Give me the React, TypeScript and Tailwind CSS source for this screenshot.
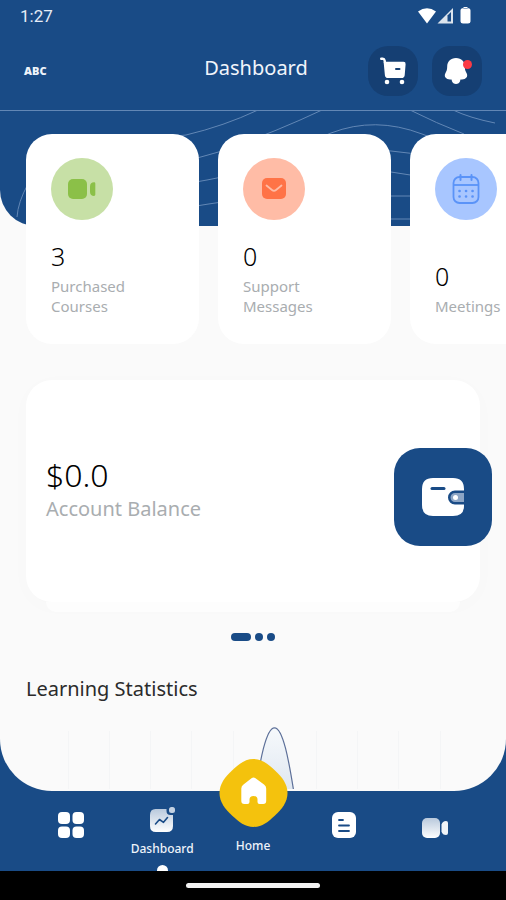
import React from 'react';
import clsx from 'clsx';

type Stat = {
  value: string;
  label: string;
  /** Background class of the round icon holder */
  tint: string;
  icon: React.ReactNode;
};

const VideoIcon = () => (
  <svg viewBox="0 0 28 20" className="h-5 w-7">
    <rect x="0" y="0" width="19" height="20" rx="5" fill="#8bc048" />
    <path
      d="M22 7.2c0-2.6 1.8-4 3.9-4 .9 0 1.4.5 1.4 1.4v11c0 .9-.5 1.4-1.4 1.4-2.1 0-3.900-1.400-3.900-4z"
      fill="#8bc048"
    />
  </svg>
);

const MailIcon = () => (
  <svg viewBox="0 0 26 24" className="h-6 w-[26px]">
    <rect x="1" y="1" width="24" height="21" rx="5" fill="#ff7347" />
    <path
      d="M5.500 8.500 11 13q2 1.600 4 0l5.500-4.500"
      fill="none"
      stroke="#ffbca6"
      strokeWidth="1.800"
      strokeLinecap="round"
    />
  </svg>
);

const CalendarIcon = () => (
  <svg viewBox="0 0 28 32" className="h-8 w-7" fill="none" stroke="#5a93f8">
    <rect x="1.500" y="4" width="25" height="26" rx="6" strokeWidth="1.800" />
    <path d="M2 12h24" strokeWidth="1.800" />
    <path d="M8.500 2v5M19.500 2v5" strokeWidth="2" strokeLinecap="round" />
    <path
      d="M7.500 18h.1M14 18h.1M20.500 18h.1M7.500 23.500h.1M14 23.500h.1M20.500 23.500h.1"
      strokeWidth="2.600"
      strokeLinecap="round"
    />
  </svg>
);

const stats: Stat[] = [
  {
    value: '3',
    label: 'Purchased Courses',
    tint: 'bg-[#c7e0a6]',
    icon: <VideoIcon />,
  },
  {
    value: '0',
    label: 'Support Messages',
    tint: 'bg-[#ffbca6]',
    icon: <MailIcon />,
  },
  {
    value: '0',
    label: 'Meetings',
    tint: 'bg-[#a8c6ff]',
    icon: <CalendarIcon />,
  },
];

const StatusBar = () => (
  <div className="flex h-8 items-center justify-between pl-5 pr-[33px]">
    <span className="font-[Roboto,sans-serif] text-[17px] leading-5 text-[#e6edf7]">
      1:27
    </span>
    <svg viewBox="0 0 56 18" className="h-[18px] w-14" fill="#fff">
      <path d="M1 4.500Q10 -2 19 4.500L10 16.500z" />
      <path d="M20.500 16.500 36 1v15.500z" opacity=".85" />
      <path d="M30.500 8.500 34 5v9.500h-3.500z" fill="#194b86" />
      <path d="M46.500 1.500h4V0h-4zM46.500 1h4q3 0 3 2.500v11q0 2-2.500 2h-5q-2.500 0-2.500-2v-11Q43.500 1 46.500 1z" />
    </svg>
  </div>
);

const TopBar = () => (
  <div className="grid h-[78px] grid-cols-[1fr_auto_1fr] items-center px-6">
    <span className="text-[11px] leading-4 font-black text-[#eef3fa]">ABC</span>
    <h1 className="pb-1.5 pl-1.5 text-xl text-[#f1f5fb]">Dashboard</h1>
    <div className="flex justify-end gap-[14px]">
      <button
        type="button"
        aria-label="Cart"
        className="flex size-[50px] items-center justify-center rounded-[20px] bg-[#153f73]"
      >
        <svg viewBox="0 0 28 28" className="size-7">
          <path
            d="M2.200 1.800h1.600q1.500 0 1.800 1.600L6 5.500"
            fill="none"
            stroke="#fff"
            strokeWidth="2.400"
            strokeLinecap="round"
          />
          <path
            d="M4.600 4.800H24.500q2.300 0 2.100 2.400l-.9 11Q25.400 21 22.500 21H9q-2.800 0-3.100-2.800z"
            fill="#fff"
          />
          <path d="M17 12h3.500" stroke="#153f73" strokeWidth="2" strokeLinecap="round" />
          <circle cx="8" cy="25" r="2.300" fill="#fff" />
          <circle cx="23" cy="25" r="2.300" fill="#fff" />
        </svg>
      </button>
      <button
        type="button"
        aria-label="Notifications"
        className="flex size-[50px] items-center justify-center rounded-[18px] bg-[#153f73]"
      >
        <svg viewBox="0 0 30 28" className="h-7 w-[30px]">
          <path
            d="M14 1C8.500 1 5.200 5 5.200 9.500c0 3-.6 4.500-1.700 6.500-2 3.800.6 6.200 4.500 6.500q6 .6 12 0c3.900-.3 6.500-2.700 4.500-6.500-1.100-2-1.700-3.500-1.700-6.500C22.800 5 19.500 1 14 1z"
            fill="#fff"
          />
          <path d="M9.800 22h8.400v2q-1.200 3-4.200 3t-4.200-3z" fill="#fff" />
          <circle cx="25.500" cy="7.500" r="4.500" fill="#fb3b45" />
        </svg>
      </button>
    </div>
  </div>
);

const HeaderPattern = () => (
  <svg
    viewBox="0 0 506 116"
    preserveAspectRatio="xMidYMin slice"
    className="h-[116px] w-full"
    fill="none"
    stroke="#6287b5"
    strokeWidth="1"
  >
    <path d="M0 .5h506" />
    <path d="M17 107Q18 92 28 74Q60 36 186 25Q224 16 258 0" />
    <path d="M190 50Q208 45 222 41Q280 20 322 0" />
    <path d="M190 73Q208 70 222 67Q290 40 331 23Q375 6 422 24Q450 34 506 60" />
    <path d="M190 97Q208 94 222 92Q300 30 391 41Q410 42 430 48" />
    <path d="M240 100Q310 62 391 62Q410 64 430 70" />
    <path d="M300 96Q350 84 391 86H430" />
    <path d="M300 112Q350 108 391 109H430" />
    <path d="M410 0Q436 13 464 24M453 0Q470 8 495 13" />
  </svg>
);

const StatCard = ({ value, label, tint, icon }: Stat) => (
  <article className="flex h-[210px] w-[173px] shrink-0 flex-col justify-between rounded-[26px] bg-white px-[25px] pt-6 pb-7">
    <div
      className={clsx(
        'flex size-[62px] items-center justify-center rounded-full',
        tint,
      )}
    >
      {icon}
    </div>
    <div>
      <p className="mb-2 text-[25px] leading-6 font-light text-black">{value}</p>
      <p className="w-24 text-[15px] leading-5 text-[#a9adb0]">{label}</p>
    </div>
  </article>
);

const BalanceCard = () => (
  <section className="mx-[26px] mt-9">
    <div className="flex h-[222px] items-center justify-between rounded-[26px] bg-white pl-5 shadow-[0_4px_24px_rgba(0,0,0,0.015)]">
      <div className="pt-1">
        <p className="text-[32px] leading-8 font-light text-black">$0.0</p>
        <p className="text-xl leading-9 text-[#a9adb0]">Account Balance</p>
      </div>
      <button
        type="button"
        aria-label="Wallet"
        className="-mr-3 mt-3 flex size-[98px] items-center justify-center rounded-[26px] bg-[#194b86]"
      >
        <svg viewBox="0 0 42 40" className="h-10 w-[42px]">
          <path
            d="M11 1h20q11 0 11 11v1.500h-9a7 7 0 0 0 0 14h9V29q0 10-11 10H11Q0 39 0 28V12Q0 1 11 1z"
            fill="#fff"
          />
          <path d="M10 11.500h12" stroke="#194b86" strokeWidth="3" strokeLinecap="round" />
          <path d="M42 16h-9a4.500 4.500 0 0 0 0 9h9z" fill="#8ca5c5" />
          <circle cx="33.500" cy="20.500" r="2.500" fill="#fff" />
        </svg>
      </button>
    </div>
    <div className="mx-5 h-[10px] rounded-b-[16px] bg-[#fdfdfd]" />
  </section>
);

const StatisticsChart = () => (
  <svg
    viewBox="0 0 506 62"
    preserveAspectRatio="xMidYMin slice"
    className="block h-[62px] w-full"
  >
    <defs>
      <linearGradient id="peak-fill" x1="0" y1="0" x2="0" y2="1">
        <stop offset="0" stopColor="#f6f9fc" />
        <stop offset="1" stopColor="#dfe7f0" />
      </linearGradient>
    </defs>
    <path
      d="M68.500 4v58M109.500 4v58M150.500 4v58M191.500 4v58M233.500 4v58M316.500 4v58M357.500 4v58M398.500 4v58M440.500 4v58"
      stroke="#f4f5f6"
    />
    <path
      d="M255 66C260 34 266 .8 274.500.8S289 34 294 66"
      fill="url(#peak-fill)"
      stroke="#5d7099"
      strokeWidth="1.200"
    />
  </svg>
);

const GridIcon = () => (
  <svg viewBox="0 0 26 26" className="size-[26px]" fill="#fff">
    <rect x="0" y="0" width="12" height="12" rx="4" />
    <rect x="14.500" y="0" width="11.500" height="12" rx="4" />
    <rect x="0" y="14.500" width="12" height="11.500" rx="4" />
    <rect x="14.500" y="14.500" width="11.500" height="11.500" rx="4" />
  </svg>
);

const ActivityIcon = () => (
  <svg viewBox="0 0 26 26" className="size-[26px]">
    <defs>
      <linearGradient id="activity-fill" x1="0" y1="0" x2="0" y2="1">
        <stop offset="0" stopColor="#b9c9dc" />
        <stop offset="1" stopColor="#fff" />
      </linearGradient>
    </defs>
    <path
      d="M6.500 2h11v2q0 4 4 4H24v11q0 6-6 6H7q-6 0-6-6V8q0-6 5.500-6z"
      fill="url(#activity-fill)"
    />
    <path
      d="m6.500 17 4-4.500 4 2.800 4-4.800"
      fill="none"
      stroke="#194b86"
      strokeWidth="1.600"
      strokeLinecap="round"
      strokeLinejoin="round"
    />
    <rect x="20" y="0" width="6" height="6" rx="2.500" fill="#c3d1e2" />
  </svg>
);

const DocumentIcon = () => (
  <svg viewBox="0 0 24 26" className="h-[26px] w-6">
    <rect width="24" height="26" rx="6" fill="#fff" />
    <path
      d="M7 8h4M7 13.500h10M7 19h10"
      stroke="#194b86"
      strokeWidth="1.800"
      strokeLinecap="round"
    />
  </svg>
);

const CameraIcon = () => (
  <svg viewBox="0 0 26 20" className="h-5 w-[26px]">
    <defs>
      <linearGradient id="camera-fill" x1="0" y1="0" x2="0" y2="1">
        <stop offset="0" stopColor="#b9c9dc" />
        <stop offset="1" stopColor="#fff" />
      </linearGradient>
    </defs>
    <rect width="18" height="20" rx="5" fill="url(#camera-fill)" />
    <path
      d="M19.500 6.500Q20.500 3 24 3q2 0 2 2v10q0 2-2 2-3.500 0-4.500-3.500z"
      fill="#f0f4f8"
    />
  </svg>
);

const HomeIcon = () => (
  <svg viewBox="0 0 70 70" className="size-[70px]">
    <path
      d="M35.500 1C44 1 50 6 57 12.500S69.500 26 69.500 35 64 51 57 57.500 44 69 35.500 69 21 64 14 57.500 1.500 44 1.500 35 7 19 14 12.500 27 1 35.500 1z"
      fill="#f4c20d"
    />
    <path
      d="M33.500 20.300q2-1.600 4 0l8.500 6.200q2.200 1.600 2.200 4V43q0 3-3 3h-3.700q-2 0-2-2v-2.500q0-3.500-4-3.500t-4 3.500V44q0 2-2 2h-3.200q-3 0-3-3V30.500q0-2.400 2.200-4z"
      fill="#fff"
    />
  </svg>
);

const BottomNav = () => (
  <nav className="grid h-20 grid-cols-5 px-[26px] text-xs leading-4 text-[#eef3fa]">
    <button
      type="button"
      aria-label="Categories"
      className="flex items-center justify-center pb-3"
    >
      <GridIcon />
    </button>
    <button
      type="button"
      aria-current="page"
      className="flex flex-col items-center justify-between pt-4"
    >
      <ActivityIcon />
      <span className="font-medium">Dashboard</span>
      <span className="h-[6px] w-[11px] rounded-t-full bg-white" />
    </button>
    <button
      type="button"
      className="-mt-[33px] flex flex-col items-center justify-start gap-[10px]"
    >
      <HomeIcon />
      <span className="font-medium">Home</span>
    </button>
    <button
      type="button"
      aria-label="Articles"
      className="flex items-center justify-center pb-3"
    >
      <DocumentIcon />
    </button>
    <button
      type="button"
      aria-label="Classes"
      className="flex items-center justify-center pb-[6px]"
    >
      <CameraIcon />
    </button>
  </nav>
);

export default function App() {
  return (
    <div className="flex min-h-screen flex-col bg-[#194b86] font-['Noto_Sans',sans-serif]">
      <main className="flex flex-1 flex-col overflow-hidden rounded-b-[52px] bg-[#fafafa]">
        <header className="rounded-b-[36px] bg-[#194b86]">
          <StatusBar />
          <TopBar />
          <HeaderPattern />
        </header>

        <section className="relative -mt-[92px] flex gap-[19px] overflow-hidden pl-[26px]">
          {stats.map((stat) => (
            <StatCard key={stat.label} {...stat} />
          ))}
        </section>

        <BalanceCard />

        {/* Carousel position */}
        <div className="mt-[21px] flex justify-center gap-1">
          <span className="h-2 w-5 rounded-full bg-[#194b86]" />
          <span className="size-2 rounded-full bg-[#194b86]" />
          <span className="size-2 rounded-full bg-[#194b86]" />
        </div>

        <h2 className="mt-[34px] mb-6 px-[26px] text-xl leading-7 text-[#2b2b2b]">
          Learning Statistics
        </h2>
        <StatisticsChart />
      </main>

      <BottomNav />

      <footer className="flex h-[29px] items-center justify-center bg-black">
        <span className="h-[5px] w-[134px] rounded-full bg-[#f2f2f2]" />
      </footer>
    </div>
  );
}
